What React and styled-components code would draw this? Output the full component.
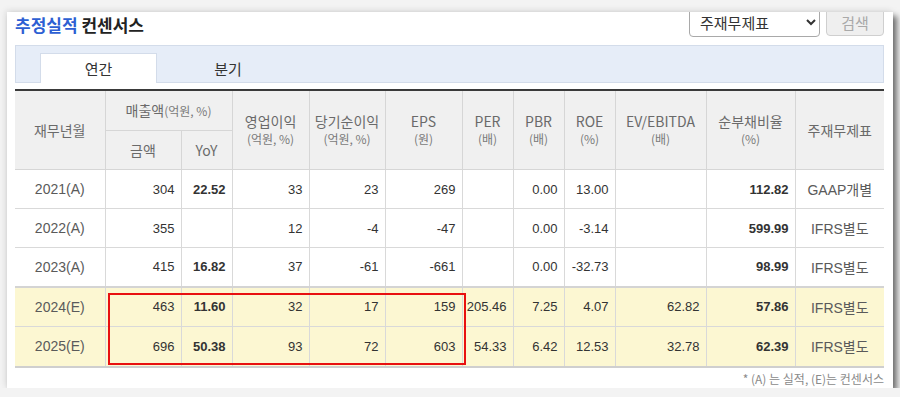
import React from 'react';
import styled, { createGlobalStyle } from 'styled-components';

const GlobalStyle = createGlobalStyle`
  html, body {
    margin: 0;
    padding: 0;
    background: #f3f3f3;
    font-family: 'Liberation Sans', 'Noto Sans CJK KR', sans-serif;
  }
`;

const Panel = styled.div`
  position: relative;
  margin: 12px 0 0 7px;
  width: 886px;
  height: 376px;
  box-sizing: border-box;
  padding: 0 9px 0 8px;
  background: #fff;
  box-shadow: 4px 4px 6px rgba(0, 0, 0, 0.55), -2px -2px 6px rgba(0, 0, 0, 0.08);
  overflow: hidden;
`;

const TopRow = styled.div`
  display: flex;
  justify-content: space-between;
  align-items: flex-start;
  height: 25px;
`;

const Title = styled.h2`
  margin: 3px 0 0;
  font-family: 'Noto Sans CJK KR', sans-serif;
  font-size: 17px;
  font-weight: 700;
  line-height: 20px;
  color: #222;
`;

const Blue = styled.span`
  color: #2d5fd3;
`;

const Controls = styled.div`
  display: flex;
  gap: 6px;
  margin-top: -4px;
`;

const Select = styled.select`
  width: 131px;
  height: 29px;
  padding: 0 6px;
  border: 1px solid #a9a9a9;
  border-radius: 4px;
  background: #fff;
  font-family: 'Noto Sans CJK KR', sans-serif;
  font-size: 15px;
  color: #333;
`;

const SearchButton = styled.button`
  width: 58px;
  height: 28px;
  border: 1px solid #cfcfcf;
  border-radius: 4px;
  background: #efefef;
  font-family: 'Noto Sans CJK KR', sans-serif;
  font-size: 15px;
  color: #a9a9a9;
`;

const TabBar = styled.div`
  display: flex;
  align-items: flex-end;
  height: 38px;
  margin-top: 8px;
  padding-left: 24px;
  box-sizing: border-box;
  background: #e6edf8;
  border: 1px solid #d3dcea;
`;

const Tab = styled.div`
  width: ${p => p.$w}px;
  height: 30px;
  box-sizing: border-box;
  display: flex;
  align-items: center;
  justify-content: center;
  margin-bottom: -1px;
  font-family: 'Noto Sans CJK KR', sans-serif;
  font-size: 15px;
  color: #333;
  background: ${p => (p.$active ? '#fff' : 'transparent')};
  border: 1px solid ${p => (p.$active ? '#d3dcea' : 'transparent')};
  border-bottom: none;
`;

const TableWrap = styled.div`
  position: relative;
  margin-top: 6px;
`;

const Table = styled.table`
  width: 869px;
  border-collapse: collapse;
  table-layout: fixed;
  border-top: 2px solid #3a3a3a;
  border-bottom: 2px solid #cfcfcf;
`;

const Th = styled.th`
  height: ${p => p.$h || 38}px;
  padding: 0;
  background: #f0f0f0;
  border: 1px solid #d6d6d6;
  border-top: none;
  font-family: 'Noto Sans CJK KR', sans-serif;
  font-size: 14px;
  font-weight: 400;
  line-height: 17px;
  color: #6a6a6a;
  text-align: center;
  vertical-align: middle;
  &:first-child { border-left: none; }
  &:last-child { border-right: none; }
`;

const Unit = styled.span`
  display: ${p => (p.$inline ? 'inline' : 'block')};
  font-size: 12px;
  color: #7a7a7a;
`;

const Tr = styled.tr`
  height: ${p => (p.$est ? 40 : 39)}px;
  background: ${p => (p.$est ? '#fcf7d2' : '#fff')};
  border-top: ${p => (p.$first ? '2px solid #d4d4d4' : 'none')};
`;

const Td = styled.td`
  padding: 0 6px 0 0;
  border: 1px solid #d9d9d9;
  font-size: 13px;
  color: #333;
  font-weight: ${p => (p.$bold ? 700 : 400)};
  text-align: right;
  white-space: nowrap;
  &:first-child { border-left: none; }
  &:last-child { border-right: none; }
`;

const Label = styled.td`
  padding: 0;
  border: 1px solid #d9d9d9;
  border-left: none;
  font-family: 'Liberation Sans', 'Noto Sans CJK KR', sans-serif;
  font-size: 14px;
  color: #5a5a5a;
  text-align: center;
  &:last-child { border-right: none; }
`;

const Highlight = styled.div`
  position: absolute;
  left: 93px;
  top: 204px;
  width: 358px;
  height: 72px;
  box-sizing: border-box;
  border: 2px solid #e81010;
  pointer-events: none;
`;

const Note = styled.div`
  margin-top: 4px;
  text-align: right;
  font-family: 'Noto Sans CJK KR', sans-serif;
  font-size: 12px;
  line-height: 14px;
  color: #8a8a8a;
`;

const widths = [90, 76, 51, 77, 76, 77, 51, 51, 51, 91, 89, 89];

const rows = [
  { year: '2021(A)', v: ['304', '22.52', '33', '23', '269', '', '0.00', '13.00', '', '112.82'], std: 'GAAP개별' },
  { year: '2022(A)', v: ['355', '', '12', '-4', '-47', '', '0.00', '-3.14', '', '599.99'], std: 'IFRS별도' },
  { year: '2023(A)', v: ['415', '16.82', '37', '-61', '-661', '', '0.00', '-32.73', '', '98.99'], std: 'IFRS별도' },
  { year: '2024(E)', v: ['463', '11.60', '32', '17', '159', '205.46', '7.25', '4.07', '62.82', '57.86'], std: 'IFRS별도', est: true },
  { year: '2025(E)', v: ['696', '50.38', '93', '72', '603', '54.33', '6.42', '12.53', '32.78', '62.39'], std: 'IFRS별도', est: true },
];

const boldCols = [1, 9];

const App = () => {
  return (
    <>
      <GlobalStyle />
      <Panel>
        <TopRow>
          <Title><Blue>추정실적</Blue> 컨센서스</Title>
          <Controls>
            <Select defaultValue="main">
              <option value="main">주재무제표</option>
              <option value="sep">별도</option>
            </Select>
            <SearchButton disabled>검색</SearchButton>
          </Controls>
        </TopRow>

        <TabBar>
          <Tab $active $w={117}>연간</Tab>
          <Tab $w={142}>분기</Tab>
        </TabBar>

        <TableWrap>
          <Table>
            <colgroup>
              {widths.map((w, i) => <col key={i} style={{ width: w }} />)}
            </colgroup>
            <thead>
              <tr>
                <Th rowSpan={2}>재무년월</Th>
                <Th colSpan={2} $h={39}>매출액<Unit $inline>(억원, %)</Unit></Th>
                <Th rowSpan={2}>영업이익<Unit>(억원, %)</Unit></Th>
                <Th rowSpan={2}>당기순이익<Unit>(억원, %)</Unit></Th>
                <Th rowSpan={2}>EPS<Unit>(원)</Unit></Th>
                <Th rowSpan={2}>PER<Unit>(배)</Unit></Th>
                <Th rowSpan={2}>PBR<Unit>(배)</Unit></Th>
                <Th rowSpan={2}>ROE<Unit>(%)</Unit></Th>
                <Th rowSpan={2}>EV/EBITDA<Unit>(배)</Unit></Th>
                <Th rowSpan={2}>순부채비율<Unit>(%)</Unit></Th>
                <Th rowSpan={2}>주재무제표</Th>
              </tr>
              <tr>
                <Th $h={38}>금액</Th>
                <Th $h={38}>YoY</Th>
              </tr>
            </thead>
            <tbody>
              {rows.map((r, i) => (
                <Tr key={r.year} $est={r.est} $first={i === 3}>
                  <Label>{r.year}</Label>
                  {r.v.map((val, j) => (
                    <Td key={j} $bold={boldCols.includes(j)}>{val}</Td>
                  ))}
                  <Label>{r.std}</Label>
                </Tr>
              ))}
            </tbody>
          </Table>
          <Highlight />
        </TableWrap>

        <Note>* (A) 는 실적, (E)는 컨센서스</Note>
      </Panel>
    </>
  );
};

export default App;
